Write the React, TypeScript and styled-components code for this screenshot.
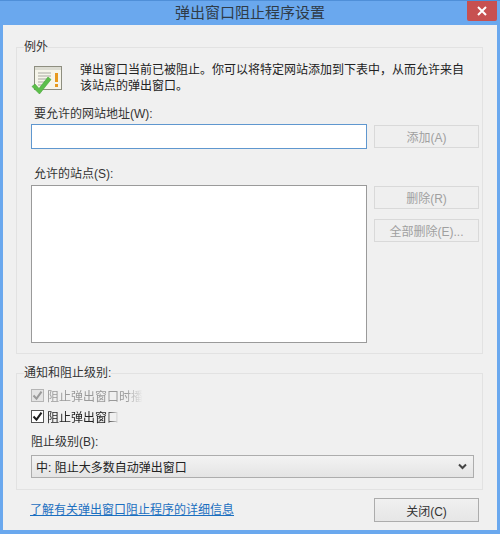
import * as React from "react";
import styled, { createGlobalStyle } from "styled-components";

const GlobalStyle = createGlobalStyle`
  html, body {
    margin: 0;
    padding: 0;
  }
  body {
    font-family: "Liberation Sans", "Noto Sans CJK SC", sans-serif;
    font-size: 12px;
    color: #2a2a2a;
  }
`;

const Window = styled.div`
  width: 500px;
  height: 534px;
  box-sizing: border-box;
  display: flex;
  flex-direction: column;
  background: #6aa8ee;
  border-top: 1px solid #4f8fd8;
  overflow: hidden;
`;

const TitleBar = styled.div`
  position: relative;
  height: 24px;
  box-sizing: border-box;
  padding-bottom: 3px;
  flex: none;
  display: flex;
  align-items: center;
  justify-content: center;
  font-size: 15px;
  color: #2f3b47;
`;

const CloseX = styled.div`
  position: absolute;
  top: 0;
  right: 3px;
  width: 30px;
  height: 20px;
  background: #c75050;
  display: flex;
  align-items: center;
  justify-content: center;
  border-radius: 0 0 2px 2px;
`;

const Client = styled.div`
  flex: 1;
  margin: 0 3px 4px;
  background: #f0f0f0;
  padding: 14px 13px 0;
  display: flex;
  flex-direction: column;
`;

const Group = styled.fieldset<{ $height: number; $top?: number }>`
  margin: ${(p) => p.$top ?? 0}px 0 0;
  padding: 0 3px 0 14px;
  height: ${(p) => p.$height}px;
  box-sizing: border-box;
  width: 467px;
  border: 1px solid #e2e2e2;
  display: flex;
  flex-direction: column;
  flex: none;
`;

const Legend = styled.legend`
  margin-left: -7px;
  padding: 0;
  line-height: 17px;
  font-size: 12px;
  color: #333;
`;

const Intro = styled.div`
  display: flex;
  gap: 17px;
  margin-top: 5px;
  height: 45px;
`;

const IconSlot = styled.div`
  flex: none;
  margin-top: 4px;
  height: 31px;
`;

const IntroText = styled.div`
  line-height: 16px;
  width: 385px;
  margin-top: 1px;
  font-size: 12px;
  color: #222;
`;

const FieldLabel = styled.div<{ $top: number }>`
  margin-top: ${(p) => p.$top}px;
  padding-left: 3px;
  line-height: 16px;
  color: #333;
`;

const Row = styled.div<{ $top: number }>`
  display: flex;
  gap: 7px;
  margin-top: ${(p) => p.$top}px;
  align-items: flex-start;
`;

const TextInput = styled.div`
  width: 336px;
  height: 25px;
  box-sizing: border-box;
  background: #fff;
  border: 1px solid #5f97cf;
`;

const ListBox = styled.div`
  width: 336px;
  height: 158px;
  box-sizing: border-box;
  background: #fff;
  border: 1px solid #9a9a9a;
`;

const ButtonColumn = styled.div`
  display: flex;
  flex-direction: column;
  gap: 10px;
  margin-top: 1px;
`;

const Button = styled.button<{ $enabled?: boolean }>`
  width: 105px;
  height: ${(p) => (p.$enabled ? 24 : 23)}px;
  margin: 0;
  padding: 0;
  box-sizing: border-box;
  font-family: inherit;
  font-size: 12px;
  color: ${(p) => (p.$enabled ? "#333" : "#a0a0a0")};
  border: 1px solid ${(p) => (p.$enabled ? "#acacac" : "#d9d9d9")};
  background: ${(p) =>
    p.$enabled ? "linear-gradient(#f0f0f0, #e6e6e6)" : "#efefef"};
`;

const AddButton = styled(Button)`
  margin-top: 1px;
`;

const CheckRow = styled.div<{ $top: number }>`
  display: flex;
  align-items: center;
  gap: 3px;
  height: 16px;
  margin-top: ${(p) => p.$top}px;
`;

const CheckBox = styled.span<{ $muted?: boolean }>`
  width: 13px;
  height: 13px;
  box-sizing: border-box;
  flex: none;
  display: flex;
  align-items: center;
  justify-content: center;
  background: ${(p) => (p.$muted ? "#e4e4e4" : "#fff")};
  border: 1px solid ${(p) => (p.$muted ? "#b5b5b5" : "#555")};
`;

const FadedText = styled.span<{ $muted?: boolean }>`
  display: block;
  white-space: nowrap;
  font-size: 12px;
  color: ${(p) => (p.$muted ? "#9a9a9a" : "#222")};
  -webkit-mask-image: linear-gradient(to right, #000 82%, transparent);
  mask-image: linear-gradient(to right, #000 82%, transparent);
`;

const LevelLabel = styled.div`
  margin-top: 10px;
  line-height: 16px;
  color: #333;
`;

const Select = styled.div`
  width: 443px;
  height: 23px;
  box-sizing: border-box;
  margin-top: 5px;
  padding: 0 6px 0 4px;
  display: flex;
  align-items: center;
  justify-content: space-between;
  border: 1px solid #adadad;
  background: linear-gradient(#f3f3f3, #e4e4e4);
  font-size: 12px;
  color: #222;
`;

const Footer = styled.div`
  display: flex;
  align-items: center;
  justify-content: space-between;
  margin-top: 8px;
  padding-left: 14px;
  box-sizing: border-box;
  width: 463px;
`;

const HelpLink = styled.a`
  color: #1b6fc0;
  text-decoration: underline;
  font-size: 12px;
  margin-bottom: 4px;
  cursor: pointer;
`;

const PopupIcon = () => (
  <svg width="32" height="31" viewBox="0 0 32 31">
    <rect x="3.5" y="1.5" width="27" height="23" fill="#f6f5ea" stroke="#8e8e80" />
    <rect x="4" y="2" width="26" height="3" fill="#dcdcd2" />
    <path
      d="M7 8h13M7 11h13M7 14h11M7 17h9M7 20h6"
      stroke="#a9a9a2"
      strokeWidth="1"
    />
    <rect x="24" y="8" width="3" height="9" fill="#e89a1e" />
    <rect x="24" y="19" width="3" height="3" fill="#e89a1e" />
    <path
      d="M1 21.5l3-2.5 4 4.5L17 12l3 2.5L8.5 29z"
      fill="#5cbf4a"
      stroke="#46a338"
      strokeWidth="0.6"
    />
  </svg>
);

const Tick = ({ color }: { color: string }) => (
  <svg width="11" height="11" viewBox="0 0 11 11">
    <path d="M1.5 5.5l3 3.2 5-7" fill="none" stroke={color} strokeWidth="2" />
  </svg>
);

const App = () => {
  return (
    <Window>
      <GlobalStyle />
      <TitleBar>
        弹出窗口阻止程序设置
        <CloseX>
          <svg width="10" height="10" viewBox="0 0 10 10">
            <path d="M1 1l8 8M9 1l-8 8" stroke="#fff" strokeWidth="2" />
          </svg>
        </CloseX>
      </TitleBar>
      <Client>
        <Group $height={315}>
          <Legend>例外</Legend>
          <Intro>
            <IconSlot>
              <PopupIcon />
            </IconSlot>
            <IntroText>
              弹出窗口当前已被阻止。你可以将特定网站添加到下表中，从而允许来自该站点的弹出窗口。
            </IntroText>
          </Intro>
          <FieldLabel $top={0}>要允许的网站地址(W):</FieldLabel>
          <Row $top={2}>
            <TextInput />
            <AddButton>添加(A)</AddButton>
          </Row>
          <FieldLabel $top={17}>允许的站点(S):</FieldLabel>
          <Row $top={3}>
            <ListBox />
            <ButtonColumn>
              <Button>删除(R)</Button>
              <Button>全部删除(E)...</Button>
            </ButtonColumn>
          </Row>
        </Group>
        <Group $height={125} $top={11}>
          <Legend>通知和阻止级别:</Legend>
          <CheckRow $top={5}>
            <CheckBox $muted>
              <Tick color="#9a9a9a" />
            </CheckBox>
            <FadedText $muted>阻止弹出窗口时播</FadedText>
          </CheckRow>
          <CheckRow $top={5}>
            <CheckBox>
              <Tick color="#1c1c1c" />
            </CheckBox>
            <FadedText>阻止弹出窗口</FadedText>
          </CheckRow>
          <LevelLabel>阻止级别(B):</LevelLabel>
          <Select>
            <span>中: 阻止大多数自动弹出窗口</span>
            <svg width="9" height="7" viewBox="0 0 9 7">
              <path d="M1 1.5l3.5 3.5L8 1.5" fill="none" stroke="#444" strokeWidth="2" />
            </svg>
          </Select>
        </Group>
        <Footer>
          <HelpLink>了解有关弹出窗口阻止程序的详细信息</HelpLink>
          <Button $enabled>关闭(C)</Button>
        </Footer>
      </Client>
    </Window>
  );
};

export default App;
